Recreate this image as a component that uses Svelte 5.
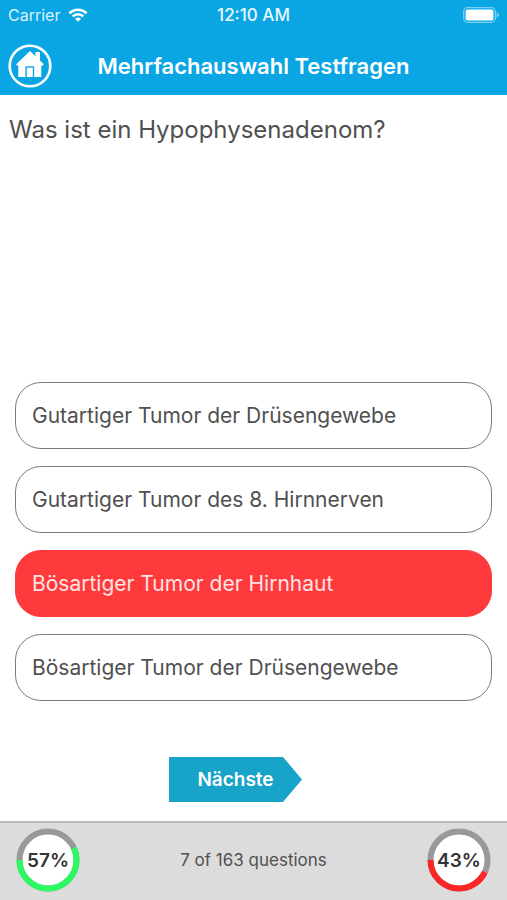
<script>
  const question = 'Was ist ein Hypophysenadenom?';
  const answers = [
    'Gutartiger Tumor der Drüsengewebe',
    'Gutartiger Tumor des 8. Hirnnerven',
    'Bösartiger Tumor der Hirnhaut',
    'Bösartiger Tumor der Drüsengewebe'
  ];

  let selected = $state(2);
  let current = 7;
  let total = 163;
</script>

{#snippet ring(percent, kind)}
  <div class="ring">
    <svg viewBox="0 0 64 64" aria-hidden="true">
      <circle class="track" cx="32" cy="32" r="28.5" />
      <!-- starts on the left and fills through the bottom -->
      <circle
        class="value {kind}"
        cx="32"
        cy="32"
        r="28.5"
        pathLength="100"
        stroke-dasharray="{percent} 100"
        transform="matrix(-1 0 0 1 64 0)"
      />
    </svg>
    <span>{percent}%</span>
  </div>
{/snippet}

<div class="app">
  <header>
    <div class="status">
      <div class="carrier">
        <span>Carrier</span>
        <svg class="wifi" viewBox="0 0 20 14" aria-hidden="true">
          <path d="M1.4 5.2A12.4 12.4 0 0 1 18.6 5.2M4.6 8.4A7.8 7.8 0 0 1 15.4 8.4" />
          <path class="dot" d="M10 13.8 7 10.8A4.2 4.2 0 0 1 13 10.8Z" />
        </svg>
      </div>
      <span class="time">12:10 AM</span>
      <svg class="battery" viewBox="0 0 36 16" aria-hidden="true">
        <rect class="case" x="0.7" y="0.7" width="31.6" height="14.6" rx="4" />
        <rect class="charge" x="2.6" y="2.6" width="27.8" height="10.8" rx="2" />
        <path class="tip" d="M33.6 5.2Q36 6.2 36 8T33.6 10.8Z" />
      </svg>
    </div>
    <div class="bar">
      <button class="home" aria-label="Home">
        <svg viewBox="0 0 44 44" aria-hidden="true">
          <circle cx="22" cy="22" r="20.3" />
          <path
            fill-rule="evenodd"
            d="M22 7 27.5 12.3V8H32V16.6L35.7 20.2 34.7 21.5H33.3V33H10.3V21.5H9L8.2 20.2ZM17.4 22.2V33H26.2V22.2Z"
          />
          <path d="M18.8 23.6H24.8V33H18.8Z" />
        </svg>
      </button>
      <h1>Mehrfachauswahl Testfragen</h1>
    </div>
  </header>

  <main>
    <h2>{question}</h2>

    <div class="answers">
      {#each answers as answer, i}
        <button class="answer" class:wrong={selected === i} onclick={() => (selected = i)}>
          {answer}
        </button>
      {/each}
    </div>

    <button class="next">Nächste</button>
  </main>

  <footer>
    {@render ring(57, 'right')}
    <p>{current} of {total} questions</p>
    {@render ring(43, 'missed')}
  </footer>
</div>

<style>
  :global(body) {
    margin: 0;
    background: #fff;
  }
  .app {
    display: flex;
    flex-direction: column;
    min-height: 100vh;
    font-family: Inter, 'Liberation Sans', sans-serif;
    color: #505050;
  }
  button {
    font-family: inherit;
    border: none;
    cursor: pointer;
  }

  header {
    background: #09a6e3;
    color: #fff;
  }
  .status {
    display: grid;
    grid-template-columns: 1fr auto 1fr;
    align-items: center;
    height: 30px;
    padding: 0 8px;
    font-size: 16px;
  }
  .carrier {
    display: flex;
    align-items: center;
    gap: 8px;
    color: #d9f3fd;
  }
  .wifi {
    width: 20px;
    height: 14px;
    fill: none;
    stroke: #fff;
    stroke-width: 2.6;
  }
  .wifi .dot {
    fill: #fff;
    stroke: none;
  }
  .time {
    font-size: 17px;
    font-weight: 500;
    color: #e8f8fe;
  }
  .battery {
    justify-self: end;
    width: 36px;
    height: 16px;
  }
  .case {
    fill: none;
    stroke: #7dd0f1;
    stroke-width: 1.3;
  }
  .charge {
    fill: #fff;
  }
  .tip {
    fill: #7dd0f1;
  }
  .bar {
    display: grid;
    grid-template-columns: 44px 1fr 44px;
    align-items: center;
    padding: 14px 8px 7px;
  }
  .home {
    width: 44px;
    height: 44px;
    padding: 0;
    background: none;
  }
  .home svg {
    display: block;
    fill: #fff;
  }
  .home circle {
    fill: none;
    stroke: #fff;
    stroke-width: 2.6;
  }
  h1 {
    margin: 0;
    font-size: 22px;
    line-height: 28px;
    font-weight: 600;
    text-align: center;
  }

  main {
    flex: 1;
    display: flex;
    flex-direction: column;
  }
  h2 {
    flex: 1;
    margin: 0;
    padding: 19px 9px;
    font-size: 24px;
    line-height: 32px;
    font-weight: 400;
  }
  .answers {
    display: flex;
    flex-direction: column;
    gap: 17px;
    padding: 0 15px;
  }
  .answer {
    height: 67px;
    padding: 0 16px;
    border: 1px solid #7c7c7c;
    border-radius: 26px;
    background: #fff;
    color: #505050;
    font-size: 21px;
    text-align: left;
  }
  .answer.wrong {
    background: #ff3a3c;
    border-color: #ff3a3c;
    color: #ffe3e3;
  }
  .next {
    align-self: center;
    width: 133px;
    height: 45px;
    margin: 56px 36px 19px 0;
    padding: 0;
    background: #18a3c9;
    clip-path: polygon(0 0, 114px 0, 100% 50%, 114px 100%, 0 100%);
    color: #fff;
    font-size: 19px;
    font-weight: 600;
  }

  footer {
    display: flex;
    align-items: center;
    justify-content: space-between;
    padding: 5px 16px 8px;
    border-top: 2px solid #b9b9b9;
    background: #dcdcdc;
  }
  footer p {
    margin: 0;
    font-size: 17px;
  }
  .ring {
    display: grid;
    place-items: center;
    width: 64px;
    height: 64px;
  }
  .ring svg,
  .ring span {
    grid-area: 1 / 1;
  }
  .ring svg {
    width: 64px;
    height: 64px;
  }
  .ring span {
    z-index: 1;
    color: #333;
    font-size: 19px;
    font-weight: 600;
  }
  .ring circle {
    fill: none;
    stroke-width: 6;
  }
  .ring .track {
    fill: #fff;
    stroke: #999;
  }
  .ring .right {
    stroke: #2cfa61;
  }
  .ring .missed {
    stroke: #fd2526;
  }
</style>
